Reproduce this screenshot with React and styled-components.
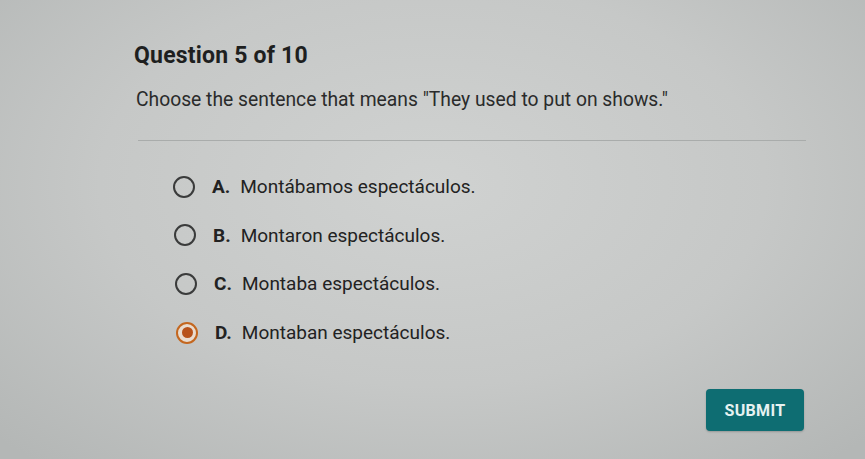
import React from "react";
import styled, { createGlobalStyle } from "styled-components";

const Global = createGlobalStyle`
  html, body { margin: 0; padding: 0; }
  body {
    width: 865px;
    height: 459px;
    overflow: hidden;
    font-family: Roboto, "Noto Sans", sans-serif;
    background: radial-gradient(ellipse 70% 80% at 50% 40%, #d0d2d1 0%, #c6c8c7 55%, #b4b7b6 100%);
  }
`;

const Page = styled.div`
  box-sizing: border-box;
  width: 865px;
  height: 459px;
  padding: 41px 60px 0 134px;
  display: flex;
  flex-direction: column;
`;

const Title = styled.h2`
  margin: 0;
  font-size: 23px;
  font-weight: 700;
  color: #1e1f1f;
  letter-spacing: 0.2px;
  line-height: 30px;
`;

const Prompt = styled.p`
  margin: 16px 0 0 2px;
  font-size: 19.3px;
  color: #2a2b2b;
  line-height: 26px;
`;

const Divider = styled.hr`
  margin: 27px 0 0 4px;
  width: 668px;
  border: none;
  border-top: 1px solid #a9acab;
`;

const Options = styled.div`
  display: flex;
  flex-direction: column;
  gap: 23.7px;
  margin: 33px 0 0 39px;
`;

const Row = styled.label`
  display: flex;
  align-items: center;
  height: 25px;
  font-size: 19px;
  color: #222;
  padding-left: ${(p) => p.$shift}px;
`;

const Radio = styled.span`
  box-sizing: border-box;
  width: 22px;
  height: 22px;
  border-radius: 50%;
  border: 2.5px solid ${(p) => (p.$checked ? "#c4671f" : "#3a3b3b")};
  display: flex;
  align-items: center;
  justify-content: center;
  margin-right: 17px;
  background: ${(p) => (p.$checked ? "#e9dccf" : "transparent")};
  &::after {
    content: "";
    display: ${(p) => (p.$checked ? "block" : "none")};
    width: 11px;
    height: 11px;
    border-radius: 50%;
    background: #b8521a;
  }
`;

const Letter = styled.span`
  font-weight: 700;
  margin-right: 10px;
`;

const Footer = styled.div`
  display: flex;
  justify-content: flex-end;
  margin-top: 44px;
  padding-right: 1px;
`;

const SubmitButton = styled.button`
  width: 98px;
  height: 42px;
  border: none;
  border-radius: 4px;
  background: #0e6d72;
  color: #e6f2f1;
  font-family: Roboto, "Noto Sans", sans-serif;
  font-weight: 700;
  font-size: 16px;
  letter-spacing: 0.3px;
  box-shadow: 0 1px 2px rgba(0,0,0,0.2);
`;

const options = [
  { letter: "A", text: "Montábamos espectáculos.", shift: 0 },
  { letter: "B", text: "Montaron espectáculos.", shift: 1 },
  { letter: "C", text: "Montaba espectáculos.", shift: 2 },
  { letter: "D", text: "Montaban espectáculos.", shift: 3, checked: true },
];

export default function App() {
  return (
    <>
      <Global />
      <Page>
        <Title>Question 5 of 10</Title>
        <Prompt>Choose the sentence that means "They used to put on shows."</Prompt>
        <Divider />
        <Options>
          {options.map((o) => (
            <Row key={o.letter} $shift={o.shift}>
              <Radio $checked={o.checked} />
              <Letter>{o.letter}.</Letter>
              <span>{o.text}</span>
            </Row>
          ))}
        </Options>
        <Footer>
          <SubmitButton>SUBMIT</SubmitButton>
        </Footer>
      </Page>
    </>
  );
}
